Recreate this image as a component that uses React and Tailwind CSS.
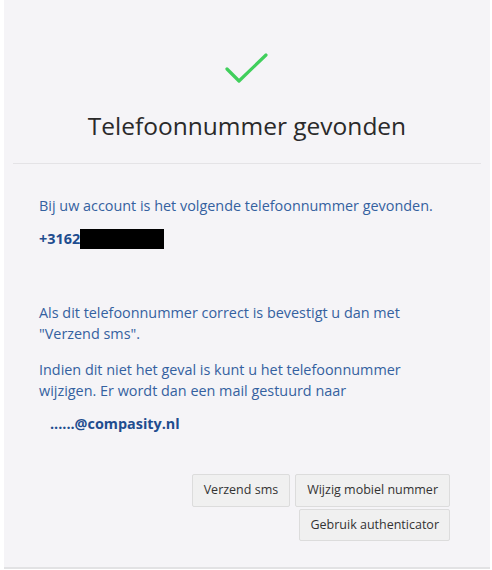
export default function App() {
    return (
        <div className="h-[570px] w-full bg-white" style={{ fontFamily: '"Open Sans", "Liberation Sans", sans-serif' }}>
            <div className="ml-[4px] flex h-[569px] w-[486px] flex-col border-b-2 border-[#e2e2e4] bg-[#f5f4f7]">
                <div className="flex flex-col items-center pt-[52px]">
                    <svg width="44" height="32" viewBox="0 0 44 32" fill="none">
                        <path d="M2 17 L14 29 L41 3" stroke="#40cf5c" strokeWidth="3.2" strokeLinecap="round" strokeLinejoin="round" />
                    </svg>
                    <h1 className="mt-[26px] text-[24.5px] leading-[32px] text-[#2a2a2a]">Telefoonnummer gevonden</h1>
                </div>
                <div className="mx-[9px] mt-[21px] border-t border-[#e4e3e6]" />

                <div className="px-[35px] pt-[31px] text-[14.4px] leading-[21px] text-[#3461a0]">
                    <p>Bij uw account is het volgende telefoonnummer gevonden.</p>
                    <p className="mt-[12px] flex items-center font-bold text-[#1f4d8f]">
                        <span>+3162</span>
                        <span className="inline-block h-[20px] w-[84px] bg-black" />
                    </p>

                    <p className="mt-[53px] pr-[40px]">
                        Als dit telefoonnummer correct is bevestigt u dan met "Verzend sms".
                    </p>
                    <p className="mt-[15px] pr-[40px]">
                        Indien dit niet het geval is kunt u het telefoonnummer wijzigen. Er wordt dan een mail gestuurd naar
                    </p>
                    <p className="mt-[12px] pl-[11px] font-bold text-[#1f4d8f]">......@compasity.nl</p>
                </div>

                <div className="mt-[40px] flex flex-wrap justify-end gap-x-[5px] gap-y-[2px] pl-[180px] pr-[40px]">
                    <button className="h-[33px] rounded-[2px] border border-[#dcdcdc] bg-[#f0f0f0] px-[11px] text-[12.5px] text-[#333]">
                        Verzend sms
                    </button>
                    <button className="h-[33px] rounded-[2px] border border-[#dcdcdc] bg-[#f0f0f0] px-[11px] text-[12.5px] text-[#333]">
                        Wijzig mobiel nummer
                    </button>
                    <button className="h-[32px] rounded-[2px] border border-[#dcdcdc] bg-[#f0f0f0] px-[10px] text-[12.5px] text-[#333]">
                        Gebruik authenticator
                    </button>
                </div>
            </div>
        </div>
    );
}
